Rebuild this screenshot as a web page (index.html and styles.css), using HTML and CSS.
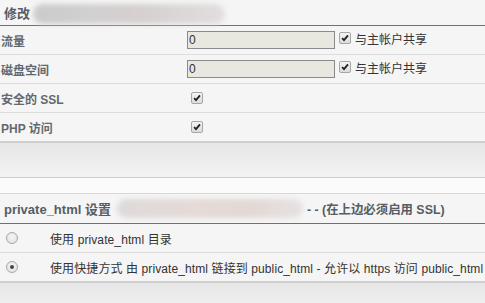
FILE: index.html
```html
<!DOCTYPE html>
<html>
<head>
<meta charset="utf-8">
<link rel="stylesheet" href="styles.css">
</head>
<body>
<section class="panel">
  <div class="head"><span class="htext">修改</span><span class="blur blur1"></span></div>
  <div class="row">
    <div class="label">流量</div>
    <div class="value"><input class="field" type="text" value="0"><span class="chk"><svg viewBox="0 0 12 12" width="12" height="12"><path d="M2.5 6.2 L4.8 8.6 L9.6 2.8" fill="none" stroke="#222" stroke-width="2.2"/></svg></span><span class="share">与主帐户共享</span></div>
  </div>
  <div class="row">
    <div class="label">磁盘空间</div>
    <div class="value"><input class="field" type="text" value="0"><span class="chk"><svg viewBox="0 0 12 12" width="12" height="12"><path d="M2.5 6.2 L4.8 8.6 L9.6 2.8" fill="none" stroke="#222" stroke-width="2.2"/></svg></span><span class="share">与主帐户共享</span></div>
  </div>
  <div class="row">
    <div class="label">安全的 SSL</div>
    <div class="value"><span class="chk chk-solo"><svg viewBox="0 0 12 12" width="12" height="12"><path d="M2.5 6.2 L4.8 8.6 L9.6 2.8" fill="none" stroke="#222" stroke-width="2.2"/></svg></span></div>
  </div>
  <div class="row last">
    <div class="label">PHP 访问</div>
    <div class="value"><span class="chk chk-solo"><svg viewBox="0 0 12 12" width="12" height="12"><path d="M2.5 6.2 L4.8 8.6 L9.6 2.8" fill="none" stroke="#222" stroke-width="2.2"/></svg></span></div>
  </div>
</section>
<div class="gap"></div>
<div class="band"></div>
<section class="panel panel2">
  <div class="head head2"><span class="htext">private_html 设置</span><span class="blur blur2"></span><span class="htext tail">- - (在上边必须启用 SSL)</span></div>
  <div class="row row2">
    <span class="radio"></span><span class="rlabel">使用 private_html 目录</span>
  </div>
  <div class="row row2 last">
    <span class="radio on"></span><span class="rlabel">使用快捷方式 由 private_html 链接到 public_html - 允许以 https 访问 public_html</span>
  </div>
</section>
<div class="gap gap2"></div>
</body>
</html>
```
FILE: styles.css
```css
html, body {
  margin: 0;
  padding: 0;
  background: #f4f4f4;
  font-family: "Liberation Sans", "Noto Sans CJK SC", sans-serif;
  font-size: 12px;
  color: #333;
  overflow: hidden;
}
.panel {
  background: #f5f5f5;
  border-bottom: 2px solid #cfcfcf;
}
.head {
  height: 25px;
  border-bottom: 1px solid #c9502c;
  display: flex;
  align-items: center;
  padding-left: 4px;
  font-weight: bold;
  font-size: 13px;
  color: #555d66;
  white-space: nowrap;
}
.head2 {
  height: 29px;
}
.tail {
  font-size: 12.4px;
}
.blur {
  display: inline-block;
  filter: blur(2.5px);
  border-radius: 10px;
}
.blur1 {
  width: 192px;
  height: 20px;
  margin-left: 3px;
  margin-top: 2px;
  background: linear-gradient(90deg, #cbcbcb 0%, #d2d0d0 30%, #d6d0d0 55%, #dcd8d8 80%, #e2dede 100%);
}
.blur2 {
  width: 186px;
  height: 19px;
  margin: 0 4px 0 6px;
  background: linear-gradient(90deg, #dedada 0%, #e4dad7 40%, #e2d8d4 70%, #e6e2e2 100%);
}
.row {
  height: 28px;
  border-bottom: 1px solid #dcdcdc;
  display: flex;
  align-items: center;
}
.row.last {
  border-bottom: none;
}
.label {
  width: 186px;
  padding-left: 1px;
  font-weight: bold;
  color: #63686e;
}
.value {
  display: flex;
  align-items: center;
}
.field {
  box-sizing: border-box;
  width: 148px;
  height: 18px;
  margin: 0;
  padding: 0 1px;
  border: 1px solid #8a8a8a;
  background: #e9e8e0;
  font-family: "Liberation Sans", sans-serif;
  font-size: 12px;
  color: #333;
  outline: none;
}
.chk {
  box-sizing: border-box;
  width: 12px;
  height: 12px;
  margin: 0 4px 4px 4px;
  border: 1px solid #a6a6a6;
  border-radius: 2px;
  background: linear-gradient(#f4f4f4, #dcdcdc);
  display: inline-flex;
  align-items: center;
  justify-content: center;
}
.chk svg {
  width: 10px;
  height: 10px;
}
.chk-solo {
  margin: 0 0 0 4px;
}
.share {
  color: #333;
  margin-top: -4px;
}
.gap {
  height: 34px;
  background: linear-gradient(#e6e6e6, #f3f3f3);
  border-bottom: 1px solid #cdcdcd;
}
.band {
  height: 15px;
  background: #fbfbfb;
  border-bottom: 1px solid #d8d8d8;
}
.row2 {
  height: 28px;
}
.radio {
  box-sizing: border-box;
  width: 12px;
  height: 12px;
  margin-left: 6px;
  border-radius: 50%;
  border: 1px solid #a8a8a8;
  background: radial-gradient(circle at 50% 40%, #f6f6f6, #dedede);
  display: inline-flex;
  align-items: center;
  justify-content: center;
}
.radio.on::after {
  content: "";
  width: 4px;
  height: 4px;
  border-radius: 50%;
  background: #444;
}
.rlabel {
  margin-left: 32px;
  color: #333;
  white-space: nowrap;
  letter-spacing: 0.1px;
}
.gap2 {
  height: 30px;
  border-bottom: none;
}
```
